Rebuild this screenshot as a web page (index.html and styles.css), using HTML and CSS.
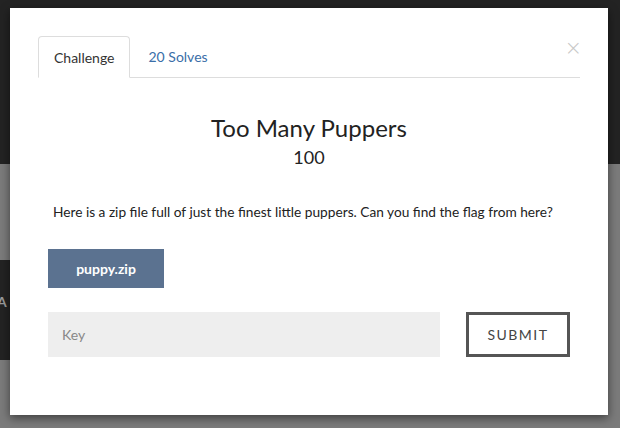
FILE: index.html
```html
<!DOCTYPE html>
<html lang="en">
<head>
    <meta charset="UTF-8">
    <meta name="viewport" content="width=device-width, initial-scale=1.0">
    <title>Too Many Puppers</title>
    <link rel="stylesheet" href="styles.css">
</head>
<body>
    <!-- page behind the modal -->
    <div class="page">
        <div class="topbar"></div>
        <div class="band"><span class="band-text">A</span></div>
    </div>

    <div class="modal">
        <button class="close" type="button">&times;</button>
        <ul class="tabs">
            <li class="tab active">Challenge</li>
            <li class="tab"><a href="#">20 Solves</a></li>
        </ul>
        <div class="challenge">
            <h2 class="title">Too Many Puppers</h2>
            <h3 class="points">100</h3>
            <p class="desc">Here is a zip file full of just the finest little puppers. Can you find the flag from here?</p>
            <a class="file" href="#">puppy.zip</a>
            <form class="answer" onsubmit="event.preventDefault();">
                <input type="text" class="key" placeholder="Key">
                <button type="submit" class="submit">Submit</button>
            </form>
        </div>
    </div>
</body>
</html>
```

FILE: styles.css
```css
body {
    margin: 0;
    font-family: Lato, "Open Sans", sans-serif;
    background-color: #7b7b7b;
    height: 428px;
    overflow: hidden;
}
.page {
    display: flex;
    flex-direction: column;
}
.topbar {
    height: 164px;
    background-color: #232323;
}
.band {
    margin-top: 96px;
    height: 100px;
    width: 40px;
    box-sizing: border-box;
    padding-top: 34px;
    background-color: #232323;
}
.band-text {
    display: block;
    color: #9a9a9a;
    font-weight: bold;
    font-size: 14px;
    line-height: 16px;
    margin-left: -3px;
}
.modal {
    position: absolute;
    left: 10px;
    top: 8px;
    width: 598px;
    height: 407px;
    box-sizing: border-box;
    background-color: #fff;
    padding: 28px 28px 0;
    box-shadow: 0 3px 9px rgba(0, 0, 0, 0.5);
}
.close {
    position: absolute;
    right: 26px;
    top: 30px;
    border: none;
    background: none;
    color: #c8c8c8;
    font-size: 21px;
    line-height: 1;
    padding: 0;
    font-family: "DejaVu Sans", sans-serif;
    font-weight: 300;
}
.tabs {
    list-style: none;
    margin: 0;
    padding: 0;
    display: flex;
    border-bottom: 1px solid #ddd;
}
.tab {
    height: 41px;
    box-sizing: border-box;
    padding: 0 15px 0 18px;
    margin-bottom: -1px;
    display: flex;
    align-items: center;
    font-size: 14px;
    border: 1px solid transparent;
    border-radius: 4px 4px 0 0;
}
.tab.active {
    color: #333;
    background-color: #fff;
    border-color: #ddd;
    border-bottom-color: #fff;
    height: 42px;
    padding: 0 14px 0 15px;
}
.tab a {
    color: #3a6ea8;
    text-decoration: none;
}
.challenge {
    padding: 0 10px;
}
.title {
    margin: 35px 0 0;
    text-align: center;
    font-size: 24px;
    font-weight: normal;
    color: #222;
    line-height: 30px;
}
.points {
    margin: 2px 0 0;
    text-align: center;
    font-size: 18px;
    font-weight: normal;
    color: #222;
    line-height: 24px;
}
.desc {
    margin: 34px 0 0 5px;
    font-size: 13.7px;
    color: #222;
    line-height: 18px;
}
.file {
    display: flex;
    align-items: center;
    justify-content: center;
    margin-top: 28px;
    width: 116px;
    height: 39px;
    background-color: #5b7290;
    color: #fff;
    font-weight: bold;
    font-size: 14px;
    text-decoration: none;
}
.answer {
    display: flex;
    justify-content: space-between;
    margin-top: 24px;
}
.key {
    width: 392px;
    height: 45px;
    box-sizing: border-box;
    border: none;
    background-color: #eee;
    padding: 0 14px;
    font-family: Lato, sans-serif;
    font-size: 14px;
}
.key::placeholder {
    color: #888;
}
.submit {
    width: 104px;
    height: 45px;
    box-sizing: border-box;
    border: 3px solid #555;
    background-color: #fff;
    color: #444;
    font-family: Lato, sans-serif;
    font-size: 14px;
    text-transform: uppercase;
    letter-spacing: 1.5px;
}
```
